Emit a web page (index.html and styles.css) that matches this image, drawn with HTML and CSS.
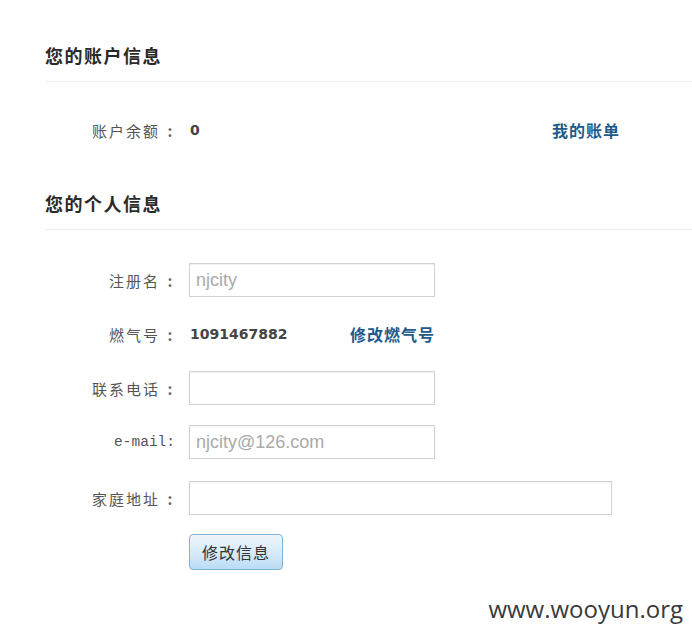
FILE: index.html
```html
<!DOCTYPE html>
<html lang="zh">
<head>
<meta charset="utf-8">
<title>您的账户信息</title>
<link rel="stylesheet" href="styles.css">
</head>
<body>
<div class="page">
  <h2 class="section-title first">您的账户信息</h2>
  <div class="row balance-row">
    <span class="label">账户余额</span>
    <span class="colon">:</span>
    <span class="value balance-value">0</span>
    <a class="link" href="#">我的账单</a>
  </div>

  <h2 class="section-title second">您的个人信息</h2>
  <form class="form">
    <div class="row">
      <span class="label">注册名</span>
      <span class="colon">:</span>
      <input class="field" type="text" placeholder="njcity">
    </div>
    <div class="row">
      <span class="label">燃气号</span>
      <span class="colon">:</span>
      <span class="value gas-value">1091467882</span>
      <a class="link" href="#">修改燃气号</a>
    </div>
    <div class="row">
      <span class="label">联系电话</span>
      <span class="colon">:</span>
      <input class="field" type="text">
    </div>
    <div class="row">
      <span class="label-mono">e-mail:</span>
      <input class="field" type="text" placeholder="njcity@126.com">
    </div>
    <div class="row row-late">
      <span class="label">家庭地址</span>
      <span class="colon">:</span>
      <input class="field wide" type="text">
    </div>
    <div class="row">
      <span class="spacer"></span>
      <button class="btn" type="button">修改信息</button>
    </div>
  </form>
  <div class="watermark">www.wooyun.org</div>
</div>
</body>
</html>
```

FILE: styles.css
```css
html, body {
  margin: 0;
  padding: 0;
  background: #fff;
}
body {
  font-family: "Noto Sans CJK SC", "Liberation Sans", sans-serif;
  color: #555;
}
.page {
  width: 647px;
  padding: 43px 0 0 45px;
  position: relative;
  height: 596px;
}
.section-title {
  margin: 0;
  font-size: 18px;
  line-height: 24px;
  font-weight: bold;
  color: #2a2a2a;
  letter-spacing: 1.5px;
  padding-bottom: 14px;
  border-bottom: 1px solid #efefef;
}
.section-title.second {
  margin-top: 44px;
}
.row {
  display: flex;
  align-items: center;
  height: 34px;
}
.balance-row {
  margin-top: 31px;
}
.form {
  margin-top: 33px;
  display: flex;
  flex-direction: column;
  gap: 20px;
}
.row-late {
  margin-top: 2px;
}
.label {
  width: 115px;
  text-align: right;
  font-size: 15px;
  letter-spacing: 2px;
  color: #555;
}
.colon {
  width: 20px;
  text-align: center;
  font-size: 15px;
  font-weight: bold;
  color: #666;
  margin-right: 9px;
}
.label-mono {
  width: 130px;
  text-align: right;
  font-family: "Liberation Mono", monospace;
  font-size: 14.5px;
  color: #555;
  margin-right: 14px;
}
.spacer {
  width: 144px;
}
.value {
  font-family: "DejaVu Sans", sans-serif;
  font-weight: bold;
  font-size: 14px;
  color: #444;
  padding-left: 1px;
}
.balance-value {
  width: 362px;
}
.gas-value {
  width: 160px;
}
.link {
  font-size: 16px;
  font-weight: bold;
  color: #1d5b8c;
  text-decoration: none;
  letter-spacing: 1px;
}
.field {
  box-sizing: border-box;
  width: 246px;
  height: 34px;
  margin: 0;
  padding: 0 6px;
  border: 1px solid #d2d2d2;
  box-shadow: inset 0 1px 1px #f0f0f0;
  font-family: "Liberation Sans", sans-serif;
  font-size: 18px;
  color: #555;
  outline: none;
}
.field::placeholder {
  color: #aaa;
}
.field.wide {
  width: 423px;
}
.btn {
  box-sizing: border-box;
  width: 94px;
  height: 36px;
  margin: 0;
  padding: 0;
  border: 1px solid #80b2d4;
  border-radius: 4px;
  background: linear-gradient(#eef6fd, #d6eaf9 55%, #b9dbf4);
  font-family: "Noto Sans CJK SC", sans-serif;
  font-size: 16px;
  color: #333;
  letter-spacing: 1px;
}
.watermark {
  position: absolute;
  right: 9px;
  bottom: 14px;
  font-family: "Open Sans", sans-serif;
  font-size: 24px;
  color: #3a3a3a;
}
```
